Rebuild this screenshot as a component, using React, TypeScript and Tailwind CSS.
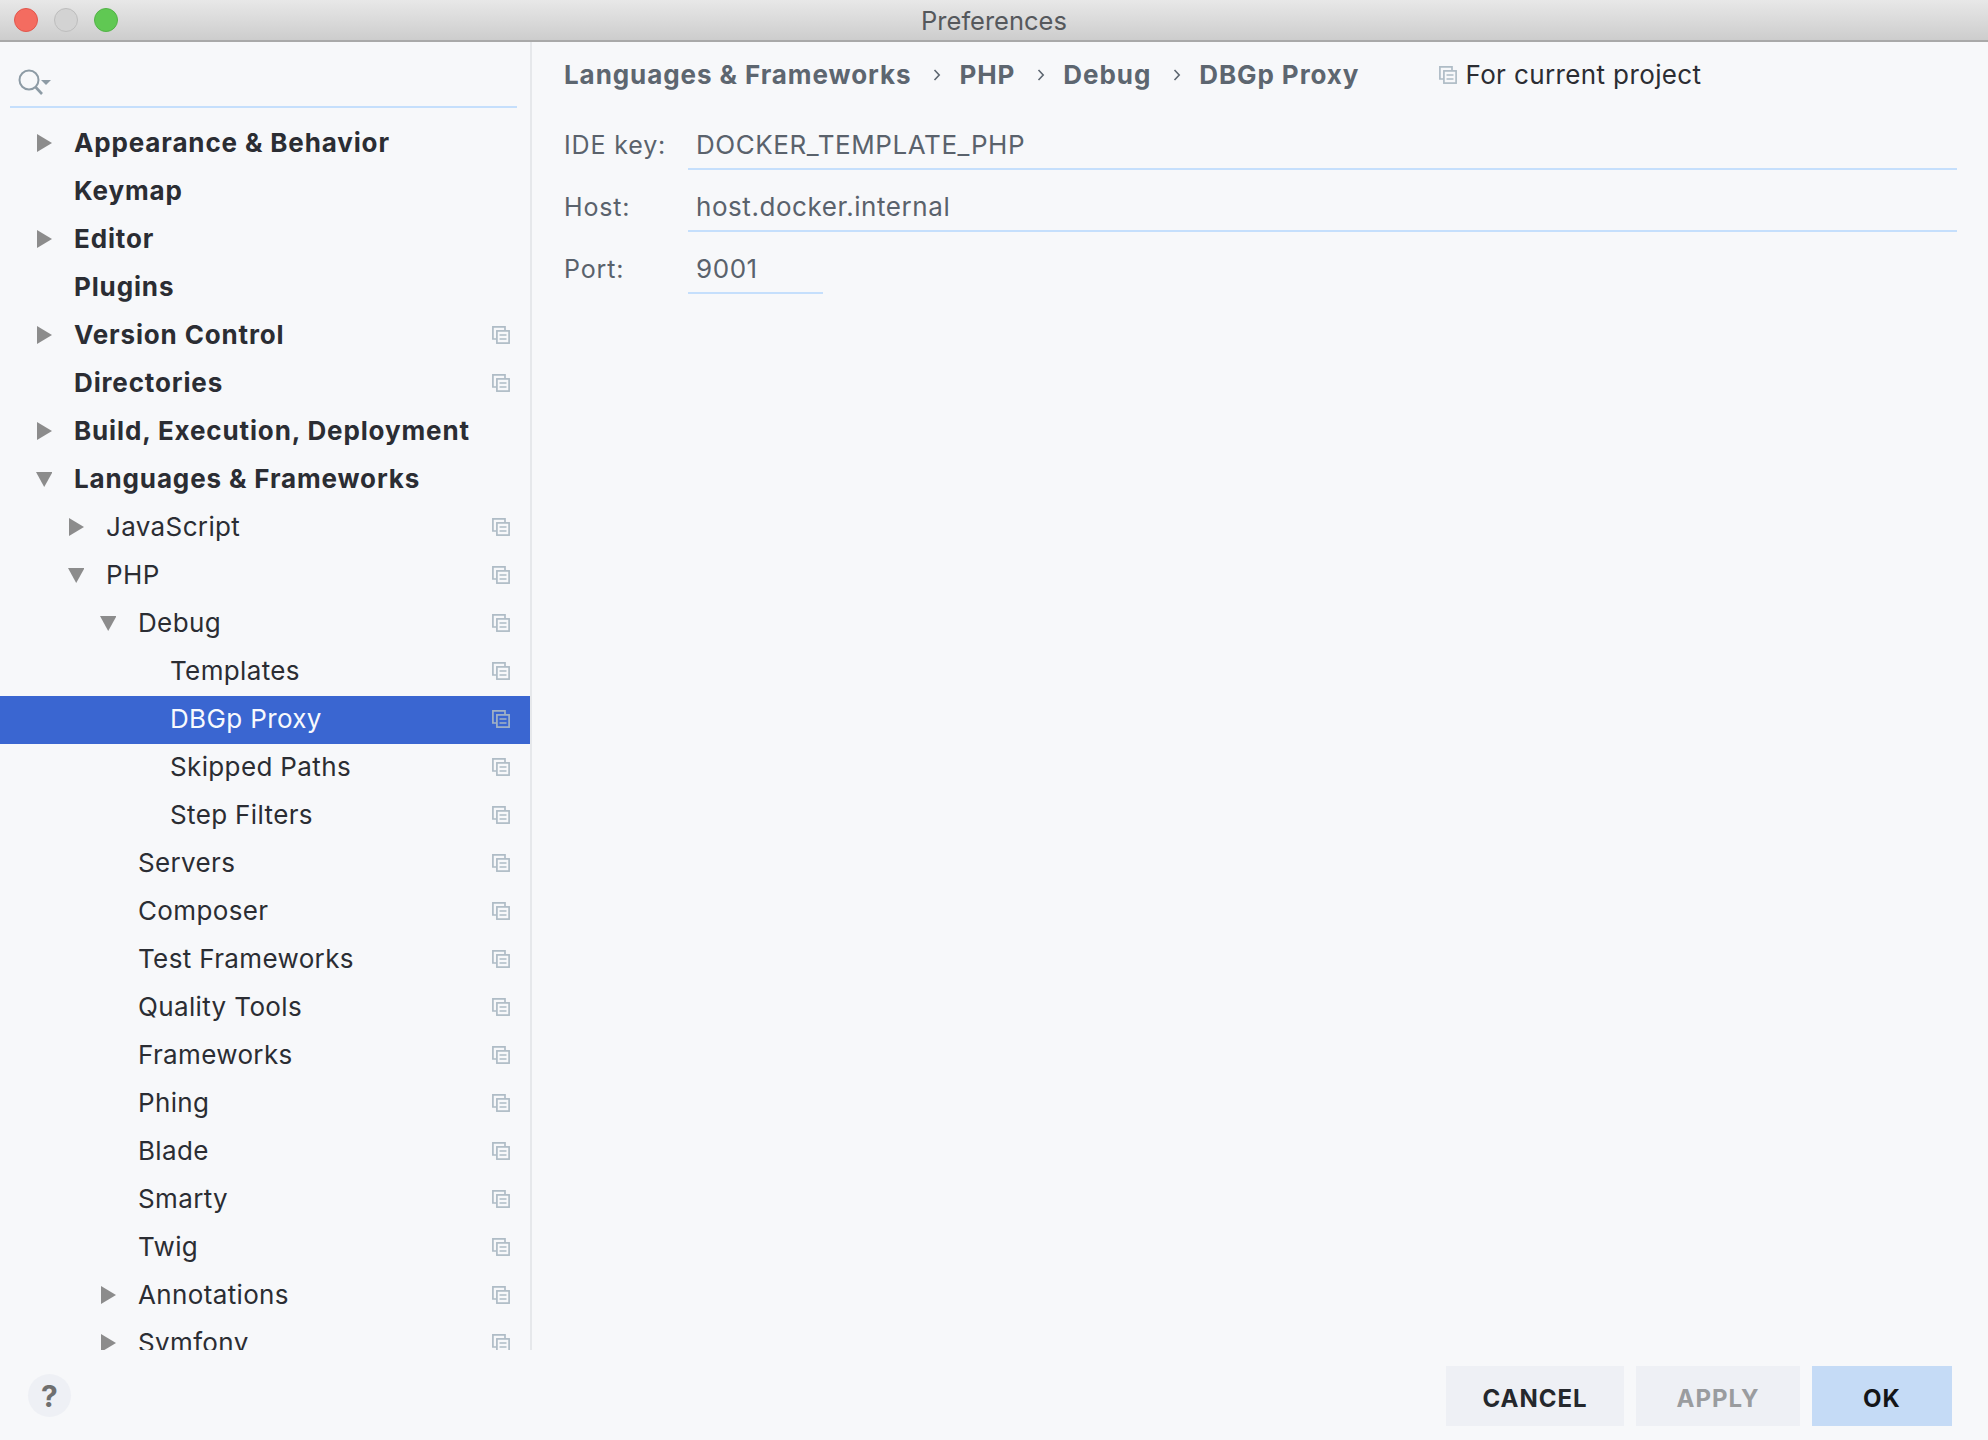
const rows: { t: string; lvl: 0 | 1 | 2 | 3; arrow?: "r" | "d"; bold?: boolean; icon?: boolean; sel?: boolean }[] = [
  { t: "Appearance & Behavior", lvl: 0, arrow: "r", bold: true },
  { t: "Keymap", lvl: 0, bold: true },
  { t: "Editor", lvl: 0, arrow: "r", bold: true },
  { t: "Plugins", lvl: 0, bold: true },
  { t: "Version Control", lvl: 0, arrow: "r", bold: true, icon: true },
  { t: "Directories", lvl: 0, bold: true, icon: true },
  { t: "Build, Execution, Deployment", lvl: 0, arrow: "r", bold: true },
  { t: "Languages & Frameworks", lvl: 0, arrow: "d", bold: true },
  { t: "JavaScript", lvl: 1, arrow: "r", icon: true },
  { t: "PHP", lvl: 1, arrow: "d", icon: true },
  { t: "Debug", lvl: 2, arrow: "d", icon: true },
  { t: "Templates", lvl: 3, icon: true },
  { t: "DBGp Proxy", lvl: 3, icon: true, sel: true },
  { t: "Skipped Paths", lvl: 3, icon: true },
  { t: "Step Filters", lvl: 3, icon: true },
  { t: "Servers", lvl: 2, icon: true },
  { t: "Composer", lvl: 2, icon: true },
  { t: "Test Frameworks", lvl: 2, icon: true },
  { t: "Quality Tools", lvl: 2, icon: true },
  { t: "Frameworks", lvl: 2, icon: true },
  { t: "Phing", lvl: 2, icon: true },
  { t: "Blade", lvl: 2, icon: true },
  { t: "Smarty", lvl: 2, icon: true },
  { t: "Twig", lvl: 2, icon: true },
  { t: "Annotations", lvl: 2, arrow: "r", icon: true },
  { t: "Symfony", lvl: 2, arrow: "r", icon: true },
];

const indent = { 0: "pl-[37px]", 1: "pl-[69px]", 2: "pl-[101px]", 3: "pl-[133px]" };

function ProjectIcon({ color }: { color: string }) {
  return (
    <svg width="18" height="18" viewBox="0 0 18 18" fill="none" stroke={color} strokeWidth="1.7" className="shrink-0">
      <path d="M13 4.5V.9H.9V13H4.5" />
      <rect x="4.9" y="4.9" width="12.2" height="12.2" />
      <path d="M7.5 9h7M7.5 13h7" />
    </svg>
  );
}

function Arrow({ dir }: { dir: "r" | "d" }) {
  return (
    <svg width="16" height="18" viewBox="0 0 16 18" fill="#8c8c8c" className={`mb-[3px] shrink-0 ${dir === "d" ? "-ml-px" : ""}`}>
      {dir === "r" ? <path d="M0 0L15 9L0 18Z" /> : <path d="M0 2H16.5L8.2 17Z" />}
    </svg>
  );
}

function Row({ r }: { r: (typeof rows)[number] }) {
  return (
    <div className={`flex h-12 shrink-0 items-center pr-5 ${indent[r.lvl]} ${r.sel ? "bg-[#3a66d1] text-[#f7f9fd]" : "text-[#2b2d33]"}`}>
      <div className="w-[37px] shrink-0">{r.arrow && <Arrow dir={r.arrow} />}</div>
      <span className={`pb-[2px] text-[26px] leading-none whitespace-nowrap ${r.bold ? "font-bold tracking-[0.86px]" : "font-normal tracking-[0.36px]"}`}>{r.t}</span>
      {r.icon && <div className="mb-[2px] ml-auto"><ProjectIcon color={r.sel ? "#a3b3c4" : "#afbcc6"} /></div>}
    </div>
  );
}

function Chevron() {
  return (
    <svg width="8" height="14" viewBox="0 0 8 14" fill="none" stroke="#5d6670" strokeWidth="1.6" className="shrink-0">
      <path d="M1.5 2L6.2 7L1.5 12" />
    </svg>
  );
}

function Field({ label, value, short }: { label: string; value: string; short?: boolean }) {
  return (
    <div className="flex h-[50px] items-center">
      <span className="w-[124px] shrink-0 text-[25px] leading-none tracking-[0.85px] text-[#5a626c]">{label}</span>
      <div className={`flex h-full items-center border-b-2 border-[#c5dffc] pl-2 pt-[2px] text-[26px] leading-none tracking-[0.56px] text-[#5a626c] ${short ? "w-[135px]" : "w-[1269px]"}`}>
        {value}
      </div>
    </div>
  );
}

function Btn({ children, cls }: { children: string; cls: string }) {
  return (
    <button className={`flex h-[60px] items-center justify-center pt-[5px] text-[24px] font-bold leading-none tracking-[1px] ${cls}`}>{children}</button>
  );
}

export default function App() {
  return (
    <div className="flex h-[1440px] w-[1988px] flex-col overflow-hidden bg-[#f7f8fa] font-['Inter','Liberation_Sans',sans-serif]">
      <div className="grid h-[42px] shrink-0 grid-cols-[1fr_auto_1fr] items-center border-b-2 border-[#a9a9a9] bg-gradient-to-b from-[#e8e8e8] to-[#cdcdcd]">
        <div className="flex gap-4 pl-[14px]">
          <span className="size-6 rounded-full border border-[#e2564c] bg-[#f46c60]" />
          <span className="size-6 rounded-full border border-[#bdbdbd] bg-[#d3d3d3]" />
          <span className="size-6 rounded-full border border-[#52b347] bg-[#60c853]" />
        </div>
        <span className="pt-[2px] text-[25.5px] leading-none text-[#55585c]">Preferences</span>
        <div />
      </div>

      <div className="flex h-[1308px] shrink-0">
        <div className="flex h-full w-[530px] shrink-0 flex-col overflow-hidden">
          <div className="ml-[10px] mr-[13px] mb-[12px] flex h-[66px] shrink-0 items-end border-b-2 border-[#c5dffc] pb-[11px] pl-2">
            <svg width="34" height="26" viewBox="0 0 34 26" fill="none" className="shrink-0">
              <circle cx="11" cy="11" r="9.5" stroke="#8d9ba5" strokeWidth="2" />
              <path d="M17.5 18L24 25" stroke="#8d9ba5" strokeWidth="2.6" />
              <path d="M23 11H33L28 16Z" fill="#8d9ba5" />
            </svg>
          </div>
          {rows.map((r) => (
            <Row key={r.t} r={r} />
          ))}
        </div>
        <div className="w-[2px] shrink-0 bg-[#e6e8eb]" />
        <div className="flex-1 pl-[32px]">
          <div className="mb-[12px] flex h-[66px] items-center text-[26px] font-bold leading-none tracking-[0.92px] text-[#5d6670]">
            <span>Languages &amp; Frameworks</span>
            <span className="ml-[22px] mr-[18px]"><Chevron /></span>
            <span>PHP</span>
            <span className="ml-[22px] mr-[18px]"><Chevron /></span>
            <span>Debug</span>
            <span className="ml-[22px] mr-[18px]"><Chevron /></span>
            <span>DBGp Proxy</span>
            <span className="ml-[80px] mr-2"><ProjectIcon color="#afbcc6" /></span>
            <span className="font-normal tracking-[0.38px] text-[#2b2d33]">For current project</span>
          </div>
          <div className="flex flex-col gap-3">
            <Field label="IDE key:" value="DOCKER_TEMPLATE_PHP" />
            <Field label="Host:" value="host.docker.internal" />
            <Field label="Port:" value="9001" short />
          </div>
        </div>
      </div>

      <div className="flex flex-1 items-start justify-between pl-7 pr-[36px] pt-4">
        <div className="mt-[8px] flex size-[43px] items-center justify-center rounded-full bg-[#eef0f5] text-[30px] font-bold leading-none text-[#6f6f6f]">?</div>
        <div className="flex gap-3">
          <Btn cls="w-[178px] bg-[#eef0f5] text-[#25282d]">CANCEL</Btn>
          <Btn cls="w-[164px] bg-[#eef0f5] text-[#9a9c9f]">APPLY</Btn>
          <Btn cls="w-[140px] bg-[#c5dbf6] text-[#141518]">OK</Btn>
        </div>
      </div>
    </div>
  );
}
